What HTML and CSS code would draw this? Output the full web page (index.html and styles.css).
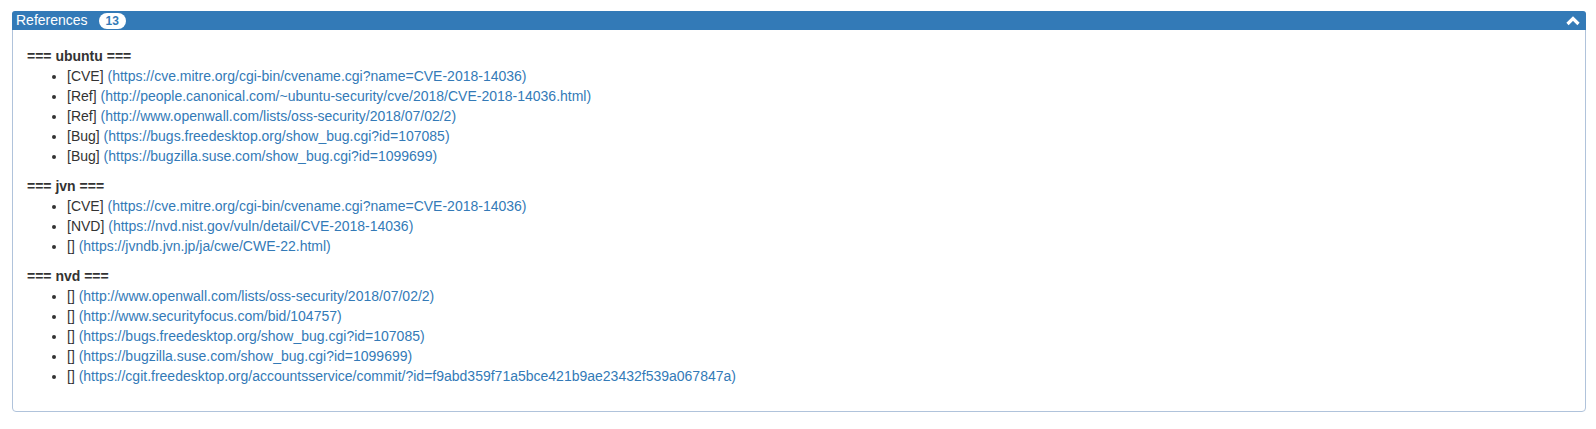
FILE: index.html
```html
<!DOCTYPE html>
<html>
<head>
<meta charset="utf-8">
<link rel="stylesheet" href="styles.css">
</head>
<body>
<div class="page">
  <div class="panel">
    <div class="panel-heading">
      <span class="title">References</span>
      <span class="badge">13</span>
      <svg class="chevron" width="14" height="10" viewBox="0 0 14 10"><path d="M1.5 8 L7 2.5 L12.5 8" fill="none" stroke="#fff" stroke-width="3.2" stroke-linejoin="miter"/></svg>
    </div>
    <div class="panel-body">
      <b class="src">=== ubuntu ===</b>
      <ul>
        <li>[CVE] <a href="#">(https://cve.mitre.org/cgi-bin/cvename.cgi?name=CVE-2018-14036)</a></li>
        <li>[Ref] <a href="#">(http://people.canonical.com/~ubuntu-security/cve/2018/CVE-2018-14036.html)</a></li>
        <li>[Ref] <a href="#">(http://www.openwall.com/lists/oss-security/2018/07/02/2)</a></li>
        <li>[Bug] <a href="#">(https://bugs.freedesktop.org/show_bug.cgi?id=107085)</a></li>
        <li>[Bug] <a href="#">(https://bugzilla.suse.com/show_bug.cgi?id=1099699)</a></li>
      </ul>
      <b class="src">=== jvn ===</b>
      <ul>
        <li>[CVE] <a href="#">(https://cve.mitre.org/cgi-bin/cvename.cgi?name=CVE-2018-14036)</a></li>
        <li>[NVD] <a href="#">(https://nvd.nist.gov/vuln/detail/CVE-2018-14036)</a></li>
        <li>[] <a href="#">(https://jvndb.jvn.jp/ja/cwe/CWE-22.html)</a></li>
      </ul>
      <b class="src">=== nvd ===</b>
      <ul>
        <li>[] <a href="#">(http://www.openwall.com/lists/oss-security/2018/07/02/2)</a></li>
        <li>[] <a href="#">(http://www.securityfocus.com/bid/104757)</a></li>
        <li>[] <a href="#">(https://bugs.freedesktop.org/show_bug.cgi?id=107085)</a></li>
        <li>[] <a href="#">(https://bugzilla.suse.com/show_bug.cgi?id=1099699)</a></li>
        <li>[] <a href="#">(https://cgit.freedesktop.org/accountsservice/commit/?id=f9abd359f71a5bce421b9ae23432f539a067847a)</a></li>
      </ul>
    </div>
  </div>
</div>
</body>
</html>
```

FILE: styles.css
```css
html, body {
  margin: 0;
  padding: 0;
  background: #fff;
}
body {
  font-family: "Liberation Sans", Arial, sans-serif;
  font-size: 14px;
  line-height: 20px;
  color: #333;
}
.page {
  padding: 11px 10px 0 12px;
}
.panel {
  border: 1px solid #b0c3db;
  border-radius: 4px;
  background: #fff;
}
.panel-heading {
  background: #337ab7;
  color: #fff;
  height: 19px;
  line-height: 19px;
  padding: 0 6px 0 4px;
  border-radius: 3px 3px 0 0;
  margin: -1px -1px 0 -1px;
  display: flex;
  align-items: center;
}
.title {
  font-size: 14px;
}
.badge {
  display: inline-block;
  margin-left: 11px;
  background: #fff;
  color: #337ab7;
  font-size: 12px;
  font-weight: bold;
  line-height: 1;
  padding: 2px 7px 2px;
  border-radius: 10px;
}
.chevron {
  margin-left: auto;
}
.panel-body {
  padding: 16px 15px 15px 14px;
}
.src {
  display: block;
  font-weight: bold;
}
ul {
  margin: 0 0 10px 0;
  padding-left: 40px;
}
a {
  color: #337ab7;
  text-decoration: none;
}
```
